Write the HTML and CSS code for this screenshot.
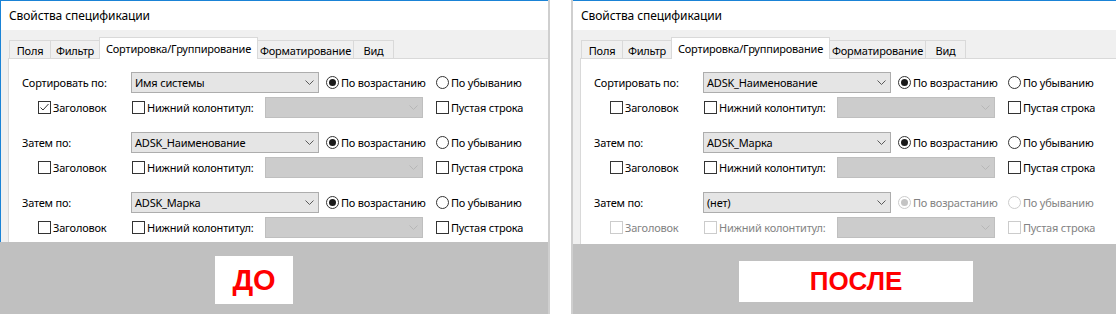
FILE: index.html
```html
<!DOCTYPE html>
<html lang="ru">
<head>
<meta charset="utf-8">
<title>Свойства спецификации — до и после</title>
<link rel="stylesheet" href="styles.css">
</head>
<body>
<div class="compare">

  <section class="shot shot--before">
    <div class="dialog">
      <div class="titlebar">Свойства спецификации</div>
      <div class="tabs">
        <div class="tab tab--fields">Поля</div>
        <div class="tab tab--filter">Фильтр</div>
        <div class="tab tab--sort tab--active">Сортировка/Группирование</div>
        <div class="tab tab--format">Форматирование</div>
        <div class="tab tab--view">Вид</div>
      </div>
      <div class="tabpanel">
        <div class="group">
          <div class="row row--main">
            <span class="label">Сортировать по:</span>
            <div class="combo"><span>Имя системы</span><svg class="chev" width="9" height="5" viewBox="0 0 9 5"><path d="M0.5 0.5 L4.5 4.5 L8.5 0.5"/></svg></div>
            <div class="choice choice--asc"><span class="dot dot--on"></span><span>По возрастанию</span></div>
            <div class="choice"><span class="dot"></span><span>По убыванию</span></div>
          </div>
          <div class="row row--sub">
            <div class="choice choice--header"><span class="box"><svg class="tick" width="11" height="11" viewBox="0 0 11 11"><path d="M1.5 5.5 L4 8 L9.5 2"/></svg></span><span>Заголовок</span></div>
            <div class="choice choice--footer"><span class="box"></span><span>Нижний колонтитул:</span></div>
            <div class="combo combo--off"><span></span><svg class="chev" width="9" height="5" viewBox="0 0 9 5"><path d="M0.5 0.5 L4.5 4.5 L8.5 0.5"/></svg></div>
            <div class="choice choice--blank"><span class="box"></span><span>Пустая строка</span></div>
          </div>
        </div>
        <div class="group">
          <div class="row row--main">
            <span class="label">Затем по:</span>
            <div class="combo"><span>ADSK_Наименование</span><svg class="chev" width="9" height="5" viewBox="0 0 9 5"><path d="M0.5 0.5 L4.5 4.5 L8.5 0.5"/></svg></div>
            <div class="choice choice--asc"><span class="dot dot--on"></span><span>По возрастанию</span></div>
            <div class="choice"><span class="dot"></span><span>По убыванию</span></div>
          </div>
          <div class="row row--sub">
            <div class="choice choice--header"><span class="box"></span><span>Заголовок</span></div>
            <div class="choice choice--footer"><span class="box"></span><span>Нижний колонтитул:</span></div>
            <div class="combo combo--off"><span></span><svg class="chev" width="9" height="5" viewBox="0 0 9 5"><path d="M0.5 0.5 L4.5 4.5 L8.5 0.5"/></svg></div>
            <div class="choice choice--blank"><span class="box"></span><span>Пустая строка</span></div>
          </div>
        </div>
        <div class="group">
          <div class="row row--main">
            <span class="label">Затем по:</span>
            <div class="combo"><span>ADSK_Марка</span><svg class="chev" width="9" height="5" viewBox="0 0 9 5"><path d="M0.5 0.5 L4.5 4.5 L8.5 0.5"/></svg></div>
            <div class="choice choice--asc"><span class="dot dot--on"></span><span>По возрастанию</span></div>
            <div class="choice"><span class="dot"></span><span>По убыванию</span></div>
          </div>
          <div class="row row--sub">
            <div class="choice choice--header"><span class="box"></span><span>Заголовок</span></div>
            <div class="choice choice--footer"><span class="box"></span><span>Нижний колонтитул:</span></div>
            <div class="combo combo--off"><span></span><svg class="chev" width="9" height="5" viewBox="0 0 9 5"><path d="M0.5 0.5 L4.5 4.5 L8.5 0.5"/></svg></div>
            <div class="choice choice--blank"><span class="box"></span><span>Пустая строка</span></div>
          </div>
        </div>
      </div>
    </div>
    <div class="caption">
      <div class="stamp stamp--before">ДО</div>
    </div>
  </section>

  <div class="divider"></div>

  <section class="shot shot--after">
    <div class="dialog">
      <div class="titlebar">Свойства спецификации</div>
      <div class="tabs">
        <div class="tab tab--fields">Поля</div>
        <div class="tab tab--filter">Фильтр</div>
        <div class="tab tab--sort tab--active">Сортировка/Группирование</div>
        <div class="tab tab--format">Форматирование</div>
        <div class="tab tab--view">Вид</div>
      </div>
      <div class="tabpanel">
        <div class="group">
          <div class="row row--main">
            <span class="label">Сортировать по:</span>
            <div class="combo"><span>ADSK_Наименование</span><svg class="chev" width="9" height="5" viewBox="0 0 9 5"><path d="M0.5 0.5 L4.5 4.5 L8.5 0.5"/></svg></div>
            <div class="choice choice--asc"><span class="dot dot--on"></span><span>По возрастанию</span></div>
            <div class="choice"><span class="dot"></span><span>По убыванию</span></div>
          </div>
          <div class="row row--sub">
            <div class="choice choice--header"><span class="box"></span><span>Заголовок</span></div>
            <div class="choice choice--footer"><span class="box"></span><span>Нижний колонтитул:</span></div>
            <div class="combo combo--off"><span></span><svg class="chev" width="9" height="5" viewBox="0 0 9 5"><path d="M0.5 0.5 L4.5 4.5 L8.5 0.5"/></svg></div>
            <div class="choice choice--blank"><span class="box"></span><span>Пустая строка</span></div>
          </div>
        </div>
        <div class="group">
          <div class="row row--main">
            <span class="label">Затем по:</span>
            <div class="combo"><span>ADSK_Марка</span><svg class="chev" width="9" height="5" viewBox="0 0 9 5"><path d="M0.5 0.5 L4.5 4.5 L8.5 0.5"/></svg></div>
            <div class="choice choice--asc"><span class="dot dot--on"></span><span>По возрастанию</span></div>
            <div class="choice"><span class="dot"></span><span>По убыванию</span></div>
          </div>
          <div class="row row--sub">
            <div class="choice choice--header"><span class="box"></span><span>Заголовок</span></div>
            <div class="choice choice--footer"><span class="box"></span><span>Нижний колонтитул:</span></div>
            <div class="combo combo--off"><span></span><svg class="chev" width="9" height="5" viewBox="0 0 9 5"><path d="M0.5 0.5 L4.5 4.5 L8.5 0.5"/></svg></div>
            <div class="choice choice--blank"><span class="box"></span><span>Пустая строка</span></div>
          </div>
        </div>
        <div class="group">
          <div class="row row--main">
            <span class="label">Затем по:</span>
            <div class="combo"><span>(нет)</span><svg class="chev" width="9" height="5" viewBox="0 0 9 5"><path d="M0.5 0.5 L4.5 4.5 L8.5 0.5"/></svg></div>
            <div class="choice choice--asc is-off"><span class="dot dot--on"></span><span>По возрастанию</span></div>
            <div class="choice is-off"><span class="dot"></span><span>По убыванию</span></div>
          </div>
          <div class="row row--sub">
            <div class="choice choice--header is-off"><span class="box"></span><span>Заголовок</span></div>
            <div class="choice choice--footer is-off"><span class="box"></span><span>Нижний колонтитул:</span></div>
            <div class="combo combo--off"><span></span><svg class="chev" width="9" height="5" viewBox="0 0 9 5"><path d="M0.5 0.5 L4.5 4.5 L8.5 0.5"/></svg></div>
            <div class="choice choice--blank is-off"><span class="box"></span><span>Пустая строка</span></div>
          </div>
        </div>
      </div>
    </div>
    <div class="caption">
      <div class="stamp stamp--after">ПОСЛЕ</div>
    </div>
  </section>

</div>
</body>
</html>
```

FILE: styles.css
```css
* { box-sizing: border-box; }

html, body {
  margin: 0;
  padding: 0;
}

body {
  width: 1116px;
  height: 314px;
  overflow: hidden;
  background: #ffffff;
  font-family: "Noto Sans", "Segoe UI", sans-serif;
  font-size: 11px;
  letter-spacing: -0.2px;
  color: #000000;
}

.compare {
  display: flex;
  height: 314px;
}

.shot {
  display: flex;
  flex-direction: column;
  overflow: hidden;
  flex: none;
}

.shot--before { width: 548px; }
.shot--after { width: 543px; }

.divider {
  flex: none;
  width: 25px;
  background: #ffffff;
  border-left: 2px solid #cfcfcf;
  border-right: 2px solid #cfcfcf;
}

/* dialog */
.dialog {
  flex: none;
  display: flex;
  flex-direction: column;
  background: #f0f0f0;
  border-top: 1px solid #1a83d6;
  overflow: hidden;
}

.shot--before .dialog {
  height: 242px;
  border-left: 1px solid #1a83d6;
}

.shot--after .dialog { height: 244px; }

.titlebar {
  flex: none;
  height: 29px;
  background: #ffffff;
  padding-left: 8px;
  display: flex;
  align-items: center;
  font-size: 12px;
  letter-spacing: -0.1px;
  white-space: nowrap;
}

/* tabs */
.tabs {
  flex: none;
  display: flex;
  align-items: flex-end;
  height: 28px;
  padding: 7px 0 0 8px;
}

.tab {
  flex: none;
  height: 18px;
  margin-left: -1px;
  border: 1px solid #d9d9d9;
  border-bottom: 0;
  background: #f0f0f0;
  display: flex;
  align-items: center;
  justify-content: center;
  padding-top: 1px;
  white-space: nowrap;
}

.tab--fields { width: 42px; margin-left: 0; }
.tab--filter { width: 50px; }
.tab--sort { width: 159px; }
.tab--format { width: 97px; }
.tab--view { width: 41px; }

.tab--active {
  height: 22px;
  margin-bottom: -1px;
  background: #ffffff;
  padding-top: 0;
  padding-bottom: 1px;
  position: relative;
  z-index: 1;
}

/* tab page */
.tabpanel {
  flex: 1;
  margin-left: 7px;
  background: #ffffff;
  border-top: 1px solid #d9d9d9;
  border-left: 1px solid #d9d9d9;
  padding-top: 13px;
  display: flex;
  flex-direction: column;
  gap: 14px;
}

.group {
  display: flex;
  flex-direction: column;
  gap: 4px;
}

.row {
  display: flex;
  align-items: center;
  height: 21px;
  white-space: nowrap;
}

.row--main { padding-left: 13px; }
.row--sub { padding-left: 29px; }

.label {
  flex: none;
  width: 109px;
}

/* combo box */
.combo {
  flex: none;
  width: 188px;
  height: 21px;
  border: 1px solid #adadad;
  background: #e5e5e5;
  display: flex;
  align-items: center;
  justify-content: space-between;
  padding: 0 4px 0 3px;
}

.chev { flex: none; }
.chev path {
  fill: none;
  stroke: #5a5a5a;
  stroke-width: 1;
}

.combo--off {
  width: 158px;
  background: #cccccc;
  border-color: #bfbfbf;
}

.combo--off .chev path { stroke: #b6b6b6; }

/* check boxes and radio buttons */
.choice {
  flex: none;
  display: flex;
  align-items: center;
  gap: 2px;
}

.choice--asc { margin-left: 7px; width: 110px; }
.choice--header { width: 94px; }
.choice--footer { width: 133px; }
.choice--blank { margin-left: 13px; }

.box {
  flex: none;
  width: 13px;
  height: 13px;
  border: 1px solid #333333;
  background: #ffffff;
  display: flex;
  align-items: center;
  justify-content: center;
}

.tick path {
  fill: none;
  stroke: #333333;
  stroke-width: 1;
}

.dot {
  flex: none;
  width: 13px;
  height: 13px;
  border-radius: 50%;
  border: 1px solid #333333;
  background: #ffffff;
  display: flex;
  align-items: center;
  justify-content: center;
}

.dot--on::after {
  content: "";
  width: 7px;
  height: 7px;
  border-radius: 50%;
  background: #1a1a1a;
}

.is-off { color: #838383; }
.is-off .box,
.is-off .dot { border-color: #cccccc; }
.is-off .dot--on::after { background: #c4c4c4; }

/* captions */
.caption {
  flex: 1;
  background: #c0c0c0;
}

.stamp {
  background: #ffffff;
  color: #ff0000;
  font-family: "Liberation Sans", Arial, sans-serif;
  font-weight: bold;
  font-size: 26px;
  letter-spacing: 0;
  display: flex;
  align-items: center;
  justify-content: center;
}

.stamp--before {
  width: 78px;
  height: 48px;
  margin: 14px 0 0 215px;
  font-size: 29px;
}

.stamp--after {
  width: 234px;
  height: 41px;
  margin: 17px 0 0 166px;
}
```
